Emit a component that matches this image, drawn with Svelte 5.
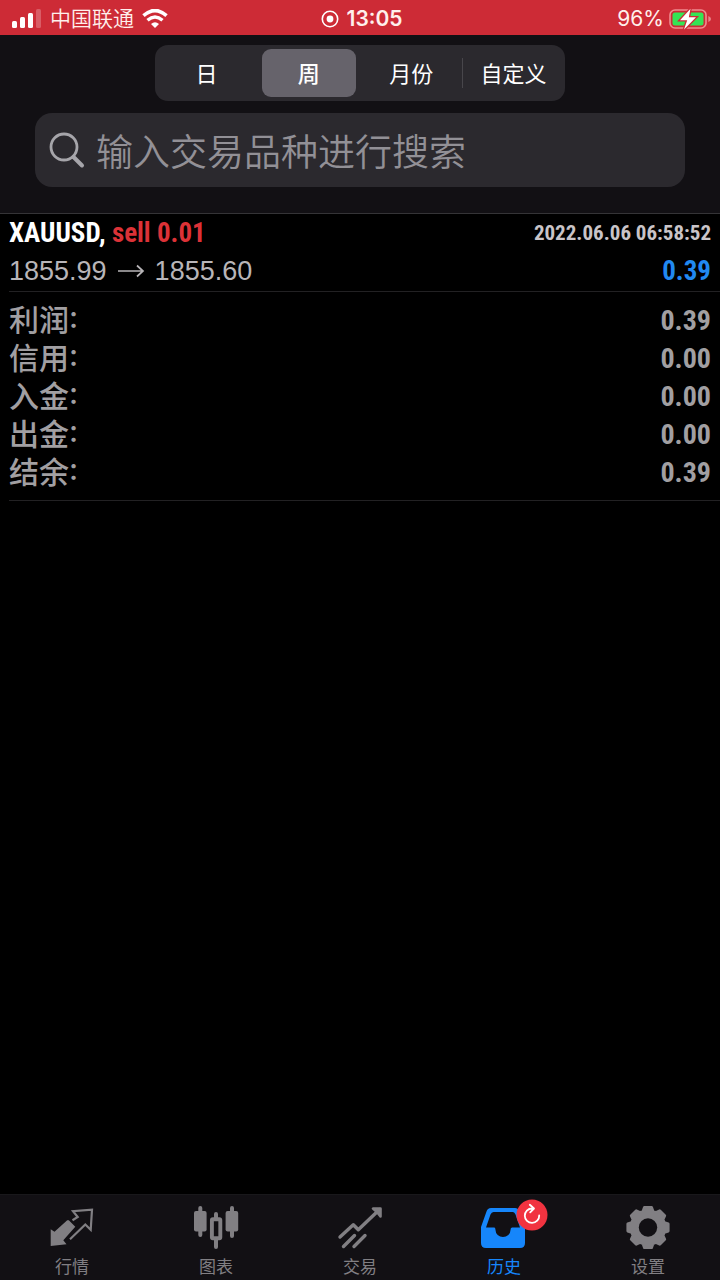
<script>
  let range = $state('周');
  let query = $state('');
  let active = $state('历史');

  const ranges = ['日', '周', '月份', '自定义'];
  const summary = [
    ['利润:', '0.39'],
    ['信用:', '0.00'],
    ['入金:', '0.00'],
    ['出金:', '0.00'],
    ['结余:', '0.39'],
  ];
  const tabs = ['行情', '图表', '交易', '历史', '设置'];

  // Outline of the eight-toothed settings gear: four corners for each tooth.
  const gear = Array.from({ length: 8 }, (_, tooth) =>
    [[-17, 17], [-10, 20.5], [10, 20.5], [17, 17]].map(([offset, radius]) => {
      const angle = ((tooth * 45 + offset) * Math.PI) / 180;
      return `${(24 + radius * Math.sin(angle)).toFixed(2)} ${(24.5 - radius * Math.cos(angle)).toFixed(2)}`;
    }).join('L')
  ).join('L');
</script>

<div class="screen">
  <div class="status">
    <div class="side">
      <svg width="30" height="20" viewBox="0 0 30 20" aria-hidden="true">
        <rect x="0" y="12" width="5" height="7" rx="1.5" fill="#fff" />
        <rect x="8" y="8" width="5" height="11" rx="1.5" fill="#fff" />
        <rect x="16" y="4" width="5" height="15" rx="1.5" fill="#fff" />
        <rect x="24" y="0" width="5" height="19" rx="1.5" fill="#fff" opacity=".24" />
      </svg>
      <span class="carrier">中国联通</span>
      <svg width="26" height="20" viewBox="0 0 26 20" aria-hidden="true">
        <path d="M1.500 6.700Q13-3.700 24.500 6.700" fill="none" stroke="#fff" stroke-width="3.600" />
        <path d="M5.500 11.200Q13 4.700 20.500 11.200" fill="none" stroke="#fff" stroke-width="3.400" />
        <path d="M9 14.900Q13 11.600 17 14.900L13 19Z" fill="#fff" />
      </svg>
    </div>
    <div class="clock">
      <svg width="18" height="18" viewBox="0 0 18 18" aria-hidden="true">
        <circle cx="9" cy="9" r="7.700" fill="none" stroke="#fff" stroke-width="1.600" />
        <circle cx="9" cy="9" r="3.400" fill="#fff" />
      </svg>
      <span>13:05</span>
    </div>
    <div class="side end">
      <span class="percent">96%</span>
      <svg width="42" height="22" viewBox="0 0 42 22" aria-hidden="true">
        <rect x="1" y="2" width="36" height="18" rx="5" fill="none" stroke="#f08c90" stroke-width="1.600" />
        <path d="M39.300 8Q42 9 42 11T39.300 14Z" fill="#e88489" />
        <rect x="3.500" y="4.500" width="31" height="13" rx="2.500" fill="#35e454" />
        <path d="M21.500 .8L11 12.300h7.200L15 21.500 27 9.200h-7.200Z" fill="#fff" stroke="#cd2b36" stroke-width="2.600" paint-order="stroke" />
      </svg>
    </div>
  </div>

  <header>
    <div class="segments" role="group" aria-label="历史">
      {#each ranges as item}
        <button class:selected={range === item} aria-pressed={range === item} onclick={() => (range = item)}>{item}</button>
      {/each}
    </div>
    <label class="search">
      <svg width="36" height="38" viewBox="0 0 36 38" aria-hidden="true">
        <circle cx="15" cy="16" r="13" fill="none" stroke="#a6a5aa" stroke-width="2.800" />
        <path d="M24.500 26L33 34.500" fill="none" stroke="#a6a5aa" stroke-width="4" stroke-linecap="round" />
      </svg>
      <input type="text" bind:value={query} placeholder="输入交易品种进行搜索" aria-label="输入交易品种进行搜索" />
    </label>
  </header>

  <main>
    <article>
      <div class="row deal">
        <span class="symbol">XAUUSD, <b>sell 0.01</b></span>
        <time datetime="2022-06-06T06:58:52">2022.06.06 06:58:52</time>
      </div>
      <div class="row">
        <span class="quote">
          1855.99
          <svg width="28" height="14" viewBox="0 0 28 14" aria-hidden="true">
            <path d="M1 7h25M20 1.500L26 7l-6 5.500" fill="none" stroke="currentColor" stroke-width="1.700" />
          </svg>
          1855.60
        </span>
        <span class="profit">0.39</span>
      </div>
    </article>
    <dl>
      {#each summary as [name, value]}
        <div class="row"><dt>{name}</dt><dd>{value}</dd></div>
      {/each}
    </dl>
  </main>

  <nav>
    {#each tabs as tab, i}
      <button class:active={active === tab} onclick={() => (active = tab)}>
        <span class="icon">
          <svg width="48" height="48" viewBox="0 0 48 48" aria-hidden="true">
            {#if i === 0}
              <path d="M2.700 26.300L6.500 28.700 19.200 17.200 20.800 17.200 27.300 23.700 15.300 37.300 18.500 41.300 2.700 43Z" fill="currentColor" />
              <path d="M24.500 17.200L29.700 14 25 8.200 44 6.700 42.700 26.800 37.300 21.500 22 36.300" fill="none" stroke="currentColor" stroke-width="2.200" />
            {:else if i === 1}
              <rect x="2" y="8" width="12.600" height="20.500" rx="2" fill="currentColor" />
              <rect x="33.600" y="8" width="12.600" height="20.500" rx="2" fill="currentColor" />
              <path d="M8.300 5v27M40 5v28M24 11v5M24 37v7" stroke="currentColor" stroke-width="4" stroke-linecap="round" fill="none" />
              <rect x="19.900" y="16.300" width="8.400" height="19" rx="1" fill="none" stroke="currentColor" stroke-width="3.900" />
            {:else if i === 2}
              <path d="M4 34L17.300 21.700 22.300 26.800 43.500 6.500M7.500 43.500L18.500 32.500M18 43.500L29 32.500" fill="none" stroke="currentColor" stroke-width="3.400" stroke-linecap="round" stroke-linejoin="round" />
              <path d="M37 5.500H44.500V13.500L41 9Z" fill="currentColor" stroke="currentColor" stroke-width="2.600" stroke-linejoin="round" />
            {:else if i === 3}
              <path transform="translate(-1 1)" fill-rule="evenodd" d="M12 4H36Q39 4 40 7L46 23V39Q46 44 41 44H7Q2 44 2 39V23L7.500 7.500Q8.500 4 12 4ZM14.500 8Q12.500 8 11.500 10.500L7 23.500H15.500Q16.500 24 16.500 26A7.500 7 0 0 0 31.500 26Q31.500 23.500 33 23.500H41L36.500 10.500Q35.500 8 34 8Z" fill="currentColor" />
            {:else}
              <path d="M{gear}Z" fill="currentColor" stroke="currentColor" stroke-width="2.800" stroke-linejoin="round" />
              <circle cx="24" cy="24.500" r="9.200" fill="#121014" />
            {/if}
          </svg>
          {#if i === 3}
            <svg class="badge" width="32" height="32" viewBox="0 0 32 32" aria-hidden="true">
              <circle cx="16" cy="16" r="15.500" fill="#f13340" />
              <path d="M16 9.500A7.200 7.200 0 1 0 23.200 16.500M13.800 5.800L18 9.500 14.200 13.300" fill="none" stroke="#fff" stroke-width="1.800" stroke-linecap="round" stroke-linejoin="round" />
            </svg>
          {/if}
        </span>
        <span>{tab}</span>
      </button>
    {/each}
  </nav>
</div>

<style>
  :global(body) {
    margin: 0;
    background: #000;
  }
  .screen {
    min-height: 100vh;
    display: flex;
    flex-direction: column;
    background: #000;
    color: #a19fa2;
    font-family: Inter, "Noto Sans CJK SC", sans-serif;
  }
  button {
    border: 0;
    padding: 0;
    background: none;
    font-family: inherit;
    color: inherit;
  }
  .status {
    display: grid;
    grid-template-columns: 1fr auto 1fr;
    align-items: center;
    height: 35px;
    padding: 2px 9px 0 12px;
    box-sizing: border-box;
    background: #cd2b36;
    color: #fff0ec;
    font-size: 21px;
  }
  .side, .clock {
    display: flex;
    align-items: center;
    gap: 8px;
  }
  .end {
    justify-content: flex-end;
    gap: 5px;
  }
  .clock {
    font-weight: 600;
  }
  .carrier {
    font-weight: 350;
    line-height: 24px;
  }
  header {
    background: #121014;
    border-bottom: 1px solid #353437;
    padding: 10px 35px 26px;
    display: flex;
    flex-direction: column;
    gap: 12px;
  }
  .segments {
    align-self: center;
    display: grid;
    grid-template-columns: repeat(4, 1fr);
    gap: 8px;
    width: 63%;
    height: 56px;
    padding: 4px;
    box-sizing: border-box;
    border-radius: 13px;
    background: #2b292e;
  }
  .segments button {
    position: relative;
    padding-bottom: 2px;
    border-radius: 9px;
    color: #fff;
    font-size: 22px;
  }
  .segments .selected {
    background: #66636b;
    font-weight: 500;
  }
  .segments button:not(.selected) + button:not(.selected)::before {
    content: "";
    position: absolute;
    left: -4px;
    top: 9px;
    bottom: 9px;
    width: 1px;
    background: #48464b;
  }
  .search {
    display: flex;
    align-items: center;
    gap: 11px;
    height: 74px;
    padding: 0 14px;
    border-radius: 17px;
    background: #2b292e;
  }
  .search svg {
    flex: none;
  }
  input {
    flex: 1;
    min-width: 0;
    height: 56px;
    padding: 0;
    border: 0;
    outline: 0;
    background: none;
    color: #fff;
    font: 350 37px "Noto Sans CJK SC", sans-serif;
  }
  input::placeholder {
    color: #929096;
    opacity: 1;
  }
  main {
    flex: 1;
    padding-left: 9px;
  }
  .row {
    display: flex;
    justify-content: space-between;
    align-items: center;
    height: 38px;
    padding-right: 9px;
  }
  article {
    padding-bottom: 1px;
    border-bottom: 1px solid #222123;
  }
  .deal, .profit, dd {
    font-family: "Roboto Condensed", "Liberation Sans Narrow", "Liberation Sans", sans-serif;
    font-weight: 700;
  }
  .symbol {
    color: #fff;
    font-size: 27px;
  }
  .symbol b {
    color: #dc3237;
    font-weight: inherit;
  }
  time {
    color: #c9c4c8;
    font-size: 21px;
  }
  .quote {
    display: flex;
    align-items: center;
    gap: 10px;
    color: #b8b5b8;
    font-family: "Liberation Sans", sans-serif;
    font-size: 27px;
  }
  .profit {
    color: #2189f2;
    font-size: 27px;
  }
  dl {
    margin: 0;
    padding: 9px 0;
    border-bottom: 1px solid #222123;
  }
  dt {
    font-size: 30px;
    font-weight: 500;
    line-height: 38px;
    font-feature-settings: "case";
  }
  dd {
    margin: 0;
    font-size: 28px;
  }
  nav {
    display: grid;
    grid-template-columns: repeat(5, 1fr);
    height: 86px;
    box-sizing: border-box;
    border-top: 1px solid #19181b;
    background: #121014;
    color: #817f83;
  }
  nav button {
    display: flex;
    flex-direction: column;
    align-items: center;
    gap: 4px;
    padding-top: 8px;
    font-size: 17px;
    line-height: 24px;
  }
  .icon {
    position: relative;
    height: 48px;
  }
  .active {
    color: #1686fb;
  }
  .badge {
    position: absolute;
    left: 36px;
    top: -4px;
  }
</style>
